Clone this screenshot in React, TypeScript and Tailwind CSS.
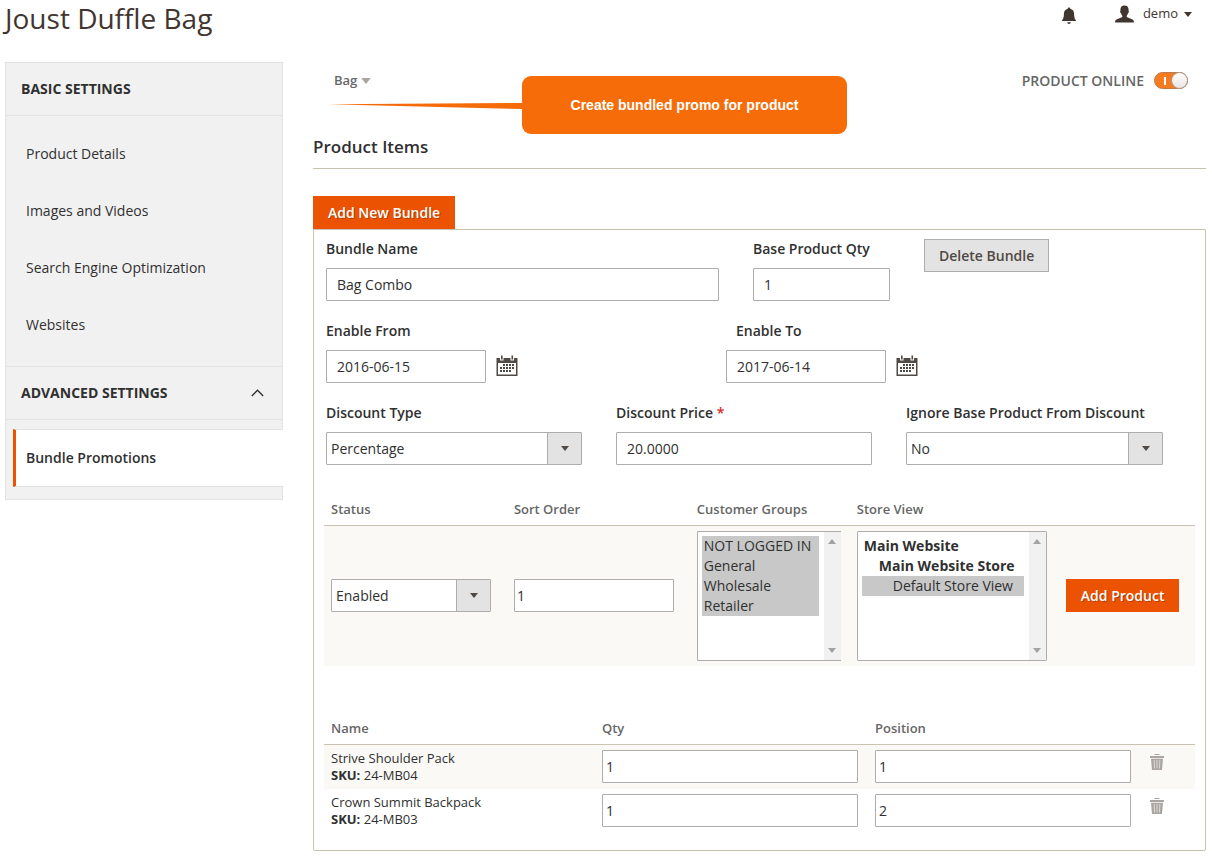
import React, { useId } from "react";

const inputBase =
  "h-[33px] w-full rounded-[1px] border border-[#adadad] bg-white text-sm text-[#303030] outline-none focus:border-[#007bdb]";

function DownTriangle({ className }: { className: string }) {
  return (
    <svg className={className} viewBox="0 0 8 5" aria-hidden="true">
      <path d="M0 0h8L4 5z" fill="currentColor" />
    </svg>
  );
}

function BellIcon() {
  return (
    <svg className="h-[18px] w-4" viewBox="0 0 16 18" fill="#41362f" aria-hidden="true">
      <path d="M8 0.5c.7 0 1.2.4 1.2 1v.3c2.500.5 3.900 2.500 3.900 5 0 3.600.7 5.400 2.200 7.200H.7c1.500-1.800 2.200-3.600 2.200-7.200 0-2.500 1.400-4.500 3.900-5v-.3c0-.6.5-1 1.200-1z" />
      <path d="M6.200 15.300h3.600c0 1-.8 1.600-1.800 1.600s-1.800-.6-1.800-1.600z" />
    </svg>
  );
}

function UserIcon() {
  return (
    <svg className="h-[18px] w-[19px]" viewBox="0 0 19 18" fill="#41362f" aria-hidden="true">
      <path d="M9.500 0.500c2.600 0 4.100 1.500 4.100 4.300 0 .6-.1 1 .2 1.400.2.700-.2 1.700-.8 2-.3 1.200-.8 2-1.300 2.600v1.300l5.300 2.100c1.300.5 1.900 1.200 2 3.300H0c.1-2.100.7-2.800 2-3.300l5.300-2.100v-1.300C6.800 10.200 6.300 9.400 6 8.200c-.6-.3-1-1.300-.8-2 .3-.4.2-.8.2-1.400C5.400 2 6.900.5 9.500.5z" />
    </svg>
  );
}

function CalendarIcon() {
  const rows: [number, number[]][] = [
    [9, [7, 10, 13, 16]],
    [12, [4, 7, 10, 13, 16]],
    [15, [4, 7, 10, 13]],
  ];
  return (
    <svg className="h-[22px] w-[22px]" viewBox="0 0 22 22" aria-hidden="true">
      <path d="M0.500 3h21v18H.500z" fill="#514943" />
      <path d="M2 8h18v11.500H2z" fill="#fff" />
      <path d="M4 0h3.500v5.500H4zM14.500 0H18v5.500h-3.500z" fill="#fff" />
      <path d="M5 0.500h1.600v4H5zM15.500 0.500h1.600v4h-1.600z" fill="#514943" />
      {rows.map(([y, xs]) =>
        xs.map((x) => <rect key={`${x}-${y}`} x={x} y={y} width="2" height="2" fill="#514943" />)
      )}
    </svg>
  );
}

function TrashIcon() {
  return (
    <svg className="h-4 w-3.5" viewBox="0 0 14 16" fill="#aba5a1" aria-hidden="true">
      <path d="M4.500 0h5v1h-5zM0 2h14v2H0z" />
      <path d="M1 4.700h12L12 16H2z" />
      <path d="M4.200 6l.3 8.500M7 6v8.500M9.800 6l-.3 8.500" fill="none" stroke="#e4e1de" strokeWidth="0.900" />
    </svg>
  );
}

function Field({
  label,
  value,
  required,
}: {
  label: string;
  value: string;
  required?: boolean;
}) {
  const id = useId();
  return (
    <div>
      <label htmlFor={id} className="mb-[9px] block text-sm font-semibold whitespace-nowrap">
        {label}
        {required && <span className="text-[#e22626]"> *</span>}
      </label>
      <input id={id} defaultValue={value} className={`${inputBase} px-2.5`} />
    </div>
  );
}

function DateField({ label, value, indent }: { label: string; value: string; indent?: boolean }) {
  const id = useId();
  return (
    <div>
      <label htmlFor={id} className={`mb-[9px] block text-sm font-semibold ${indent ? "pl-2.5" : ""}`}>
        {label}
      </label>
      <div className="flex items-center gap-2.5">
        <div className="w-40">
          <input id={id} defaultValue={value} className={`${inputBase} px-2.5`} />
        </div>
        <button type="button" aria-label={`Pick ${label} date`} className="cursor-pointer pb-0.5">
          <CalendarIcon />
        </button>
      </div>
    </div>
  );
}

function Dropdown({ id, label, options }: { id?: string; label?: string; options: string[] }) {
  return (
    <div className="relative">
      <select id={id} aria-label={label} className={`${inputBase} appearance-none pr-9 pl-1`}>
        {options.map((o) => (
          <option key={o}>{o}</option>
        ))}
      </select>
      <span className="pointer-events-none absolute inset-y-px right-px flex w-[34px] items-center justify-center border-l border-[#adadad] bg-[#e3e3e3] text-[#514943]">
        <DownTriangle className="h-[5px] w-2" />
      </span>
    </div>
  );
}

function SelectField({ label, options }: { label: string; options: string[] }) {
  const id = useId();
  return (
    <div>
      <label htmlFor={id} className="mb-[9px] block text-sm font-semibold whitespace-nowrap">
        {label}
      </label>
      <Dropdown id={id} options={options} />
    </div>
  );
}

function ScrollTrack() {
  return (
    <div
      className="flex w-[17px] shrink-0 flex-col items-center justify-between bg-[#f1f1f1] py-[7px] text-[#a3a3a3]"
      aria-hidden="true"
    >
      <DownTriangle className="h-[5px] w-2 rotate-180" />
      <DownTriangle className="h-[5px] w-2" />
    </div>
  );
}

const selectedOption =
  "h-5 min-h-0 px-0.5 py-0 text-sm leading-5 text-[#303030] checked:bg-[linear-gradient(#c8c8c8,#c8c8c8)]";

const listBox =
  "h-full min-w-0 flex-1 appearance-none overflow-hidden border-0 bg-white py-1 pr-[5px] pl-1 text-sm outline-none";

const primaryButton =
  "h-[33px] cursor-pointer bg-[#eb5202] px-[15px] text-sm font-semibold text-white [text-shadow:1px_1px_0_rgba(0,0,0,0.25)] hover:bg-[#ba4000]";

const th = "h-[33px] px-[7px] pt-0.5 text-left text-[13px] font-semibold text-[#666]";

const customerGroups = ["NOT LOGGED IN", "General", "Wholesale", "Retailer"];

const products = [
  { name: "Strive Shoulder Pack", sku: "24-MB04", qty: "1", position: "1" },
  { name: "Crown Summit Backpack", sku: "24-MB03", qty: "1", position: "2" },
];

function Sidebar() {
  return (
    <nav className="w-[278px] shrink-0 self-start border border-[#e3e3e3] bg-[#f1f1f1]">
      <h2 className="border-b border-[#e3e3e3] px-[15px] py-4 text-sm font-bold">BASIC SETTINGS</h2>
      <ul className="pt-[9px] pb-[13px]">
        {["Product Details", "Images and Videos", "Search Engine Optimization", "Websites"].map((t) => (
          <li key={t}>
            <a href="#" className="flex h-[57px] items-center px-5 text-sm">
              {t}
            </a>
          </li>
        ))}
      </ul>
      <button
        type="button"
        aria-expanded="true"
        className="flex h-[54px] w-full cursor-pointer items-center justify-between border-y border-[#e3e3e3] pr-[18px] pl-[15px] text-sm font-bold"
      >
        ADVANCED SETTINGS
        <svg className="h-2 w-[13px]" viewBox="0 0 13 8" fill="none" stroke="#303030" strokeWidth="1.300" aria-hidden="true">
          <path d="M0.800 7L6.500 1.200 12.200 7" />
        </svg>
      </button>
      <ul className="pt-[9px] pb-3">
        <li className="-mr-px pl-[7px]">
          <a
            href="#"
            aria-current="page"
            className="flex h-[58px] items-center border-y border-l-[3px] border-y-[#e3e3e3] border-l-[#eb5202] bg-white px-2.5 text-sm font-semibold text-[#303030]"
          >
            Bundle Promotions
          </a>
        </li>
      </ul>
    </nav>
  );
}

export default function App() {
  return (
    <div className="bg-white pr-1.5 pb-1.5 pl-[5px] font-['Open_Sans',sans-serif] text-[#303030]">
      <header className="flex h-[62px] items-start justify-between pr-3.5">
        <h1 className="text-[28px] leading-9 font-normal text-[#41362f]">Joust Duffle Bag</h1>
        <div className="flex h-7 items-center">
          <button type="button" aria-label="Notifications" className="mr-[38px] cursor-pointer pt-1">
            <BellIcon />
          </button>
          <button type="button" className="flex cursor-pointer items-center text-[13px] text-[#41362f]">
            <UserIcon />
            <span className="mr-1.5 ml-[9px]">demo</span>
            <DownTriangle className="h-[5px] w-2" />
          </button>
        </div>
      </header>

      <div className="flex gap-[30px]">
        <Sidebar />

        <main className="relative min-w-0 flex-1">
          <div className="flex h-[37px] items-center justify-between pr-[18px] pl-[21px]">
            <button type="button" className="flex cursor-pointer items-center gap-1 text-[13px] font-semibold text-[#666]">
              Bag
              <DownTriangle className="h-1.5 w-2.5 text-[#aaa6a0]" />
            </button>
            <label className="flex cursor-pointer items-center gap-2.5 text-sm font-semibold text-[#666]">
              PRODUCT ONLINE
              <input type="checkbox" role="switch" defaultChecked className="peer sr-only" />
              <span className="flex h-[17px] w-[34px] items-center justify-end gap-[6px] rounded-full border border-[#c07a4a] bg-[#f47b20]">
                <span className="h-2 w-0.5 bg-white" />
                <span className="size-[15px] rounded-full bg-linear-to-b from-white to-[#e8e6e4] shadow-[0_0_0_1px_#a79d95]" />
              </span>
            </label>
          </div>

          <div className="absolute top-3.5 left-[15px] flex" role="note">
            <svg className="mt-[27px] h-1.5 w-[194px]" viewBox="0 0 194 6" aria-hidden="true">
              <path d="M0 1.200L194 0v6z" fill="#f56b0a" />
            </svg>
            <div className="flex h-[58px] w-[325px] items-center justify-center rounded-[9px] bg-[#f66c09] font-['Liberation_Sans',sans-serif] text-sm font-bold text-white">
              Create bundled promo for product
            </div>
          </div>

          <h2 className="mt-9 border-b border-[#cac3b4] pb-[9px] text-[17px] leading-6 font-semibold">Product Items</h2>

          <button type="button" className={`${primaryButton} mt-[27px] block`}>
            Add New Bundle
          </button>

          <section className="rounded-b-[2px] border border-[#cac3b4] pt-[9px] pb-[17px]">
            <div className="flex flex-col gap-5 px-3">
              <div className="grid grid-cols-[393fr_137fr_269fr] gap-[34px]">
                <Field label="Bundle Name" value="Bag Combo" />
                <Field label="Base Product Qty" value="1" />
                <div>
                  <button
                    type="button"
                    className="h-[33px] cursor-pointer border border-[#adadad] bg-[#e3e3e3] px-3.5 text-sm font-semibold text-[#514943]"
                  >
                    Delete Bundle
                  </button>
                </div>
              </div>
              <div className="grid grid-cols-[400fr_467fr]">
                <DateField label="Enable From" value="2016-06-15" />
                <DateField label="Enable To" value="2017-06-14" indent />
              </div>
              <div className="grid grid-cols-[256fr_256fr_257fr] gap-[34px] pr-[30px]">
                <SelectField label="Discount Type" options={["Percentage", "Fixed"]} />
                <Field label="Discount Price" value="20.0000" required />
                <SelectField label="Ignore Base Product From Discount" options={["No", "Yes"]} />
              </div>
            </div>

            <div className="mt-[27px] px-2.5">
              <table className="w-full table-fixed">
                <colgroup>
                  <col className="w-[21%]" />
                  <col className="w-[21%]" />
                  <col className="w-[160px]" />
                  <col className="w-[24%]" />
                  <col />
                </colgroup>
                <thead>
                  <tr className="border-b border-[#cac3b4]">
                    <th className={th}>Status</th>
                    <th className={th}>Sort Order</th>
                    <th className={th}>Customer Groups</th>
                    <th className={th}>Store View</th>
                    <th className={th} aria-label="Actions" />
                  </tr>
                </thead>
                <tbody>
                  <tr className="bg-[#faf9f6]">
                    <td className="px-[7px] py-[5px]">
                      <div className="w-40">
                        <Dropdown label="Status" options={["Enabled", "Disabled"]} />
                      </div>
                    </td>
                    <td className="px-[7px] py-[5px]">
                      <div className="w-40">
                        <input aria-label="Sort Order" defaultValue="1" className={`${inputBase} px-0.5`} />
                      </div>
                    </td>
                    <td className="px-[7px] py-[5px]">
                      <div className="flex h-[130px] w-36 rounded-l-[1px] border border-r-0 border-[#adadad] bg-white">
                        <select multiple aria-label="Customer Groups" defaultValue={customerGroups} className={listBox}>
                          {customerGroups.map((g) => (
                            <option key={g} className={selectedOption}>
                              {g}
                            </option>
                          ))}
                        </select>
                        <ScrollTrack />
                      </div>
                    </td>
                    <td className="px-[7px] py-[5px]">
                      <div className="flex h-[130px] w-[190px] rounded-[1px] border border-[#adadad] bg-white">
                        <select multiple aria-label="Store View" defaultValue={["default"]} className={listBox}>
                          <option disabled className="h-5 min-h-0 px-0.5 py-0 text-sm leading-5 font-bold text-[#303030]">
                            Main Website
                          </option>
                          <option disabled className="h-5 min-h-0 py-0 pr-0.5 pl-[17px] text-sm leading-5 font-bold text-[#303030]">
                            Main Website Store
                          </option>
                          <option
                            value="default"
                            className="h-5 min-h-0 py-0 pr-0.5 pl-[31px] text-sm leading-5 text-[#303030] checked:bg-[linear-gradient(#c8c8c8,#c8c8c8)]"
                          >
                            Default Store View
                          </option>
                        </select>
                        <ScrollTrack />
                      </div>
                    </td>
                    <td className="px-[7px] py-[5px]">
                      <button type="button" className={primaryButton}>
                        Add Product
                      </button>
                    </td>
                  </tr>
                </tbody>
              </table>

              <table className="mt-[46px] w-full table-fixed">
                <colgroup>
                  <col />
                  <col className="w-[273px]" />
                  <col className="w-[273px]" />
                  <col className="w-[54px]" />
                </colgroup>
                <thead>
                  <tr className="border-b border-[#cac3b4]">
                    <th className={th}>Name</th>
                    <th className={th}>Qty</th>
                    <th className={th}>Position</th>
                    <th className={th} aria-label="Actions" />
                  </tr>
                </thead>
                <tbody>
                  {products.map((p) => (
                    <tr key={p.sku} className="h-11 align-top odd:bg-[#faf9f6]">
                      <td className="px-[7px] pt-[5px] text-[13px] leading-[17px]">
                        <div>{p.name}</div>
                        <div>
                          <strong className="font-bold">SKU:</strong> {p.sku}
                        </div>
                      </td>
                      <td className="pt-[5px] pr-2.5 pl-[7px]">
                        <input aria-label={`${p.name} quantity`} defaultValue={p.qty} className={`${inputBase} px-[3px]`} />
                      </td>
                      <td className="pt-[5px] pr-2.5 pl-[7px]">
                        <input aria-label={`${p.name} position`} defaultValue={p.position} className={`${inputBase} px-[3px]`} />
                      </td>
                      <td className="px-[9px] pt-[9px]">
                        <button type="button" aria-label={`Remove ${p.name}`} className="block cursor-pointer">
                          <TrashIcon />
                        </button>
                      </td>
                    </tr>
                  ))}
                </tbody>
              </table>
            </div>
          </section>
        </main>
      </div>
    </div>
  );
}
